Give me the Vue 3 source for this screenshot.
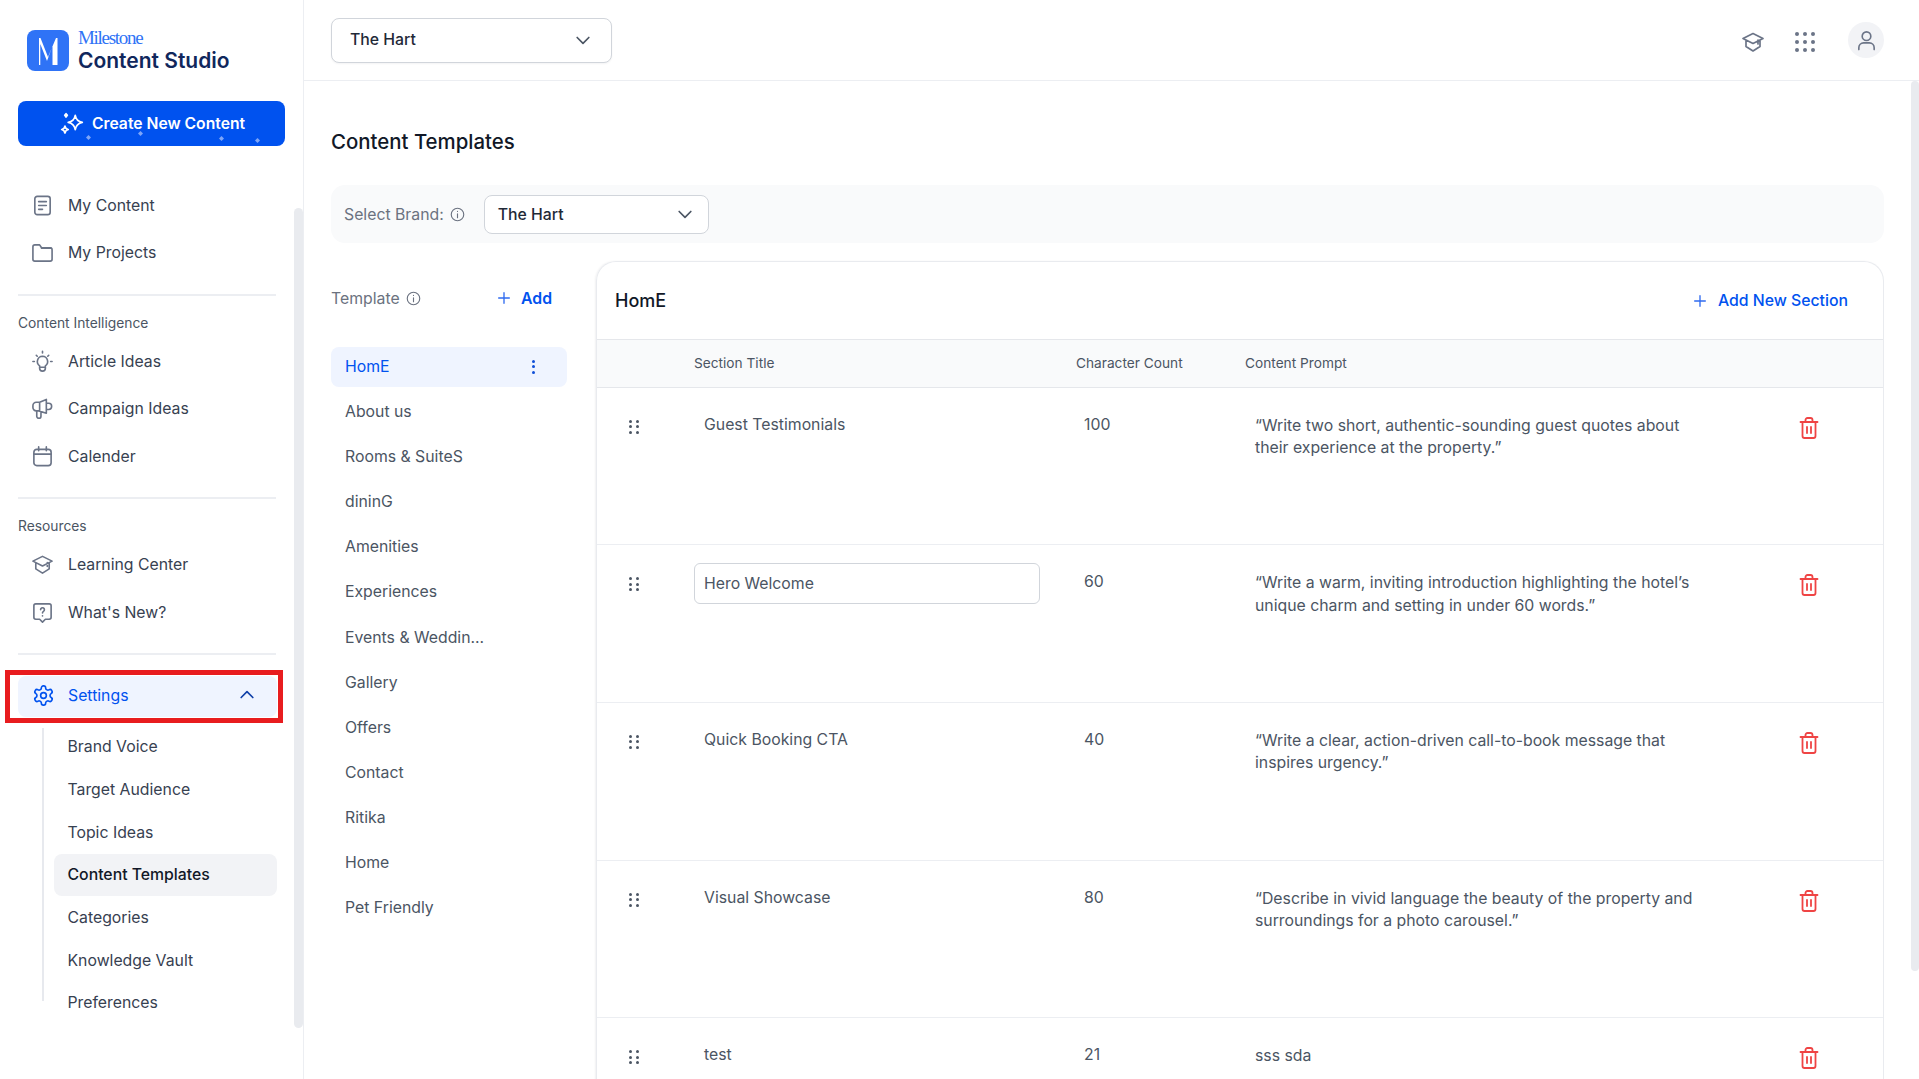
<template>
  <div class="page">
    <aside class="sidebar">
      <div class="logo">
        <div class="logo-mark"><svg width="28" height="32" viewBox="0 0 28 32"><path d="M5 30V3h1.500L14 22 22 3h1.500v27h-5V11L13 26 6.300 9v21z" fill="#fff"/></svg></div>
        <div class="logo-text">
          <div class="logo-brand">Milestone</div>
          <div class="logo-name">Content Studio</div>
        </div>
      </div>

      <button class="create-btn">
        <svg width="26" height="26" viewBox="0 0 24 24" fill="none" stroke="#fff" stroke-width="1.600" stroke-linejoin="round"><path d="M15 4c.7 4 2.400 5.800 6.500 6.500-4.100.8-5.800 2.600-6.500 6.700-.7-4.100-2.400-5.900-6.500-6.700C12.600 9.800 14.300 8 15 4z"/><path d="M5.500 14c.3 1.900 1.100 2.800 3 3.100-1.900.4-2.700 1.300-3 3.200-.3-1.900-1.100-2.800-3-3.200 1.900-.3 2.700-1.200 3-3.100z"/><path d="M6.500 2.500l1.200 1.500-1.200 1.500-1.200-1.500z" fill="#fff"/></svg>
        <span>Create New Content</span>
        <i class="spark" style="left:68px;top:34px"></i>
        <i class="spark" style="left:120px;top:30px"></i>
        <i class="spark" style="left:201px;top:35px"></i>
        <i class="spark" style="left:237px;top:37px"></i>
      </button>

      <nav class="nav nav-first">
        <a class="nav-item">
          <svg class="ico" viewBox="0 0 24 24"><rect x="4" y="2.500" width="16" height="19" rx="2.500"/><path d="M8 8h8M8 12h8M8 16h4"/></svg>
          My Content
        </a>
        <a class="nav-item">
          <svg class="ico" viewBox="0 0 24 24"><path d="M2 6a2 2 0 0 1 2-2h5l2 3h9a2 2 0 0 1 2 2v10a2 2 0 0 1-2 2H4a2 2 0 0 1-2-2z"/><path d="M11 7.500h10"/></svg>
          My Projects
        </a>
      </nav>
      <hr class="divider" />

      <div class="nav-label">Content Intelligence</div>
      <nav class="nav">
        <a class="nav-item">
          <svg class="ico" viewBox="0 0 24 24"><path d="M12 6.500a5.500 5.500 0 0 0-3 10v2.500a3 3 0 0 0 6 0v-2.500a5.500 5.500 0 0 0-3-10zM12 1.500v1.500M3.500 12H2M22 12h-1.500M5.500 5.500l1 1M18.500 5.500l-1 1M9 18h6"/></svg>
          Article Ideas
        </a>
        <a class="nav-item">
          <svg class="ico" viewBox="0 0 24 24"><path d="M16 2.500V17l-8-2.500H5.500A3.500 3.500 0 0 1 2 11V9a3.500 3.500 0 0 1 3.500-3.500H9zM16 6.500h2.500a3 3 0 0 1 3 3v.5a3 3 0 0 1-3 3H16M6 14.500V20a2.200 2.200 0 0 0 4.400 0v-4.500M9 5.500v9"/></svg>
          Campaign Ideas
        </a>
        <a class="nav-item">
          <svg class="ico" viewBox="0 0 24 24"><rect x="3" y="4.500" width="18" height="17" rx="3"/><path d="M3 9.500h18M8 2v4M16 2v4"/></svg>
          Calender
        </a>
      </nav>
      <hr class="divider" />

      <div class="nav-label">Resources</div>
      <nav class="nav">
        <a class="nav-item">
          <svg class="ico" viewBox="0 0 24 24"><path d="M12 3.500l10 5-10 5-10-5zM5 10.500v6l7 4.500 7-4.500v-6M17 10v4"/></svg>
          Learning Center
        </a>
        <a class="nav-item">
          <svg class="ico" viewBox="0 0 24 24"><path d="M5 3h14a2 2 0 0 1 2 2v12a2 2 0 0 1-2 2h-4l-3 3-3-3H5a2 2 0 0 1-2-2V5a2 2 0 0 1 2-2z"/><path d="M10 9a2 2 0 1 1 3 1.800c-.7.400-1 .8-1 1.700M12 15.500v.1"/></svg>
          What's New?
        </a>
      </nav>
      <hr class="divider" />

      <div class="settings">
        <svg class="ico" viewBox="0 0 24 24"><circle cx="12" cy="12" r="3"/><path d="M12.220 2h-.44a2 2 0 0 0-2 2v.18a2 2 0 0 1-1 1.730l-.43.25a2 2 0 0 1-2 0l-.15-.08a2 2 0 0 0-2.730.73l-.22.38a2 2 0 0 0 .73 2.730l.15.1a2 2 0 0 1 1 1.720v.51a2 2 0 0 1-1 1.740l-.15.09a2 2 0 0 0-.73 2.730l.22.38a2 2 0 0 0 2.730.73l.15-.08a2 2 0 0 1 2 0l.43.25a2 2 0 0 1 1 1.730V20a2 2 0 0 0 2 2h.44a2 2 0 0 0 2-2v-.18a2 2 0 0 1 1-1.730l.43-.25a2 2 0 0 1 2 0l.15.08a2 2 0 0 0 2.730-.73l.22-.39a2 2 0 0 0-.73-2.730l-.15-.08a2 2 0 0 1-1-1.740v-.5a2 2 0 0 1 1-1.740l.15-.09a2 2 0 0 0 .73-2.730l-.22-.38a2 2 0 0 0-2.730-.73l-.15.08a2 2 0 0 1-2 0l-.43-.25a2 2 0 0 1-1-1.730V4a2 2 0 0 0-2-2z"/></svg>
        <span class="settings-text">Settings</span>
        <svg class="chev" width="20" height="20" viewBox="0 0 24 24"><path d="M5 15l7-7 7 7"/></svg>
        <div class="annot"></div>
      </div>

      <div class="sub-nav">
        <a v-for="s in subItems" :key="s" class="sub-item" :class="{ active: s === 'Content Templates' }">{{ s }}</a>
      </div>
      <div class="side-scroll"></div>
    </aside>

    <main class="main">
      <header class="topbar">
        <div class="select select-top">
          <span>The Hart</span>
          <svg class="chev-down" width="20" height="20" viewBox="0 0 24 24"><path d="M5 9l7 7 7-7"/></svg>
        </div>
        <div class="top-icons">
          <svg class="ico top-ico" viewBox="0 0 24 24"><path d="M12 3.500l10 5-10 5-10-5zM5 10.500v6l7 4.500 7-4.500v-6M17 10v4"/></svg>
          <div class="dots">
            <i v-for="n in 9" :key="n"></i>
          </div>
          <div class="avatar">
            <svg class="ico" viewBox="0 0 24 24"><circle cx="12" cy="7.500" r="4.500"/><path d="M4 21.500v-2a5 5 0 0 1 5-5h6a5 5 0 0 1 5 5v2"/></svg>
          </div>
        </div>
      </header>

      <section class="content">
        <h1 class="page-title">Content Templates</h1>

        <div class="brand-bar">
          <span class="brand-label">Select Brand:</span>
          <svg class="info" viewBox="0 0 24 24"><circle cx="12" cy="12" r="10"/><path d="M12 11v6M12 7v.1"/></svg>
          <div class="select select-brand">
            <span>The Hart</span>
            <svg class="chev-down" width="20" height="20" viewBox="0 0 24 24"><path d="M5 9l7 7 7-7"/></svg>
          </div>
        </div>

        <div class="columns">
          <div class="templates">
            <div class="templates-head">
              <span class="brand-label">Template</span>
              <svg class="info" viewBox="0 0 24 24"><circle cx="12" cy="12" r="10"/><path d="M12 11v6M12 7v.1"/></svg>
              <a class="add">
                <svg class="plus" viewBox="0 0 24 24"><path d="M12 4v16M4 12h16"/></svg>
                Add
              </a>
            </div>
            <div class="template-list">
              <div v-for="(t, i) in templates" :key="t" class="template-item" :class="{ active: i === 0 }">
                {{ t }}
                <span v-if="i === 0" class="kebab"><i></i><i></i><i></i></span>
              </div>
            </div>
          </div>

          <div class="card">
            <div class="card-head">
              <span class="card-title">HomE</span>
              <a class="add add-section">
                <svg class="plus" viewBox="0 0 24 24"><path d="M12 4v16M4 12h16"/></svg>
                Add New Section
              </a>
            </div>
            <div class="row head-row">
              <span></span>
              <span>Section Title</span>
              <span>Character Count</span>
              <span>Content Prompt</span>
            </div>
            <div v-for="r in rows" :key="r.title" class="row body-row">
              <span class="drag"><i v-for="n in 6" :key="n"></i></span>
              <div v-if="r.editing" class="title-input">{{ r.title }}</div>
              <div v-else class="title-cell">{{ r.title }}</div>
              <div class="count-cell">{{ r.count }}</div>
              <div class="prompt-cell">{{ r.prompt }}</div>
              <svg class="trash" viewBox="0 0 24 24"><path d="M3.500 6h17M8.500 6V4a2 2 0 0 1 2-2h3a2 2 0 0 1 2 2v2M5.500 6v14a2 2 0 0 0 2 2h9a2 2 0 0 0 2-2V6M10 11v6M14 11v6"/></svg>
            </div>
          </div>
        </div>
      </section>
      <div class="main-scroll"></div>
    </main>
  </div>
</template>

<script setup>
const subItems = [
  'Brand Voice',
  'Target Audience',
  'Topic Ideas',
  'Content Templates',
  'Categories',
  'Knowledge Vault',
  'Preferences',
]

const templates = [
  'HomE',
  'About us',
  'Rooms & SuiteS',
  'dininG',
  'Amenities',
  'Experiences',
  'Events & Weddin...',
  'Gallery',
  'Offers',
  'Contact',
  'Ritika',
  'Home',
  'Pet Friendly',
]

const rows = [
  { title: 'Guest Testimonials', count: '100', prompt: '“Write two short, authentic-sounding guest quotes about their experience at the property.”' },
  { title: 'Hero Welcome', count: '60', editing: true, prompt: '“Write a warm, inviting introduction highlighting the hotel’s unique charm and setting in under 60 words.”' },
  { title: 'Quick Booking CTA', count: '40', prompt: '“Write a clear, action-driven call-to-book message that inspires urgency.”' },
  { title: 'Visual Showcase', count: '80', prompt: '“Describe in vivid language the beauty of the property and surroundings for a photo carousel.”' },
  { title: 'test', count: '21', prompt: 'sss sda' },
]
</script>

<style>
html, body {
  margin: 0;
  overflow: hidden;
  background: #fff;
}
</style>

<style scoped>
.page {
  display: flex;
  width: 1919px;
  height: 1079px;
  overflow: hidden;
  font-family: Inter, "Noto Sans", sans-serif;
  font-size: 15.8px;
  color: #374151;
}

.sidebar {
  position: relative;
  box-sizing: border-box;
  width: 304px;
  flex: none;
  padding: 30px 0 0 18px;
  border-right: 1px solid #eceef2;
}

.logo {
  display: flex;
  align-items: center;
  gap: 9px;
  height: 41px;
  margin-left: 9px;
}
.logo-mark {
  display: flex;
  align-items: center;
  justify-content: center;
  width: 42px;
  height: 41px;
  background: #2f73f6;
  border-radius: 8px;
}
.logo-brand {
  font-family: "Liberation Serif", serif;
  font-size: 19px;
  line-height: 18px;
  letter-spacing: -1.300px;
  color: #2f73f6;
  margin-top: 2px;
}
.logo-name {
  font-size: 21px;
  font-weight: 600;
  line-height: 26px;
  padding-top: 1px;
  color: #10275c;
}

.create-btn {
  position: relative;
  display: flex;
  align-items: center;
  gap: 7px;
  box-sizing: border-box;
  width: 267px;
  height: 45px;
  margin-top: 30px;
  padding: 0 0 0 41px;
  border: none;
  border-radius: 8px;
  background: #0052ef;
  color: #fff;
  font-family: inherit;
  font-size: 15.700px;
  font-weight: 600;
}
.spark {
  position: absolute;
  width: 5px;
  height: 5px;
  background: #7ea6f8;
  transform: rotate(45deg) scale(.7);
}

.nav-first {
  margin-top: 35.500px;
}
.nav-item {
  display: flex;
  align-items: center;
  gap: 14px;
  height: 47.500px;
  padding-left: 13px;
}
.ico {
  width: 23px;
  height: 23px;
  flex: none;
  fill: none;
  stroke: #6b7487;
  stroke-width: 1.700;
  stroke-linecap: round;
  stroke-linejoin: round;
}

.divider {
  width: 258px;
  height: 2px;
  margin: 17px 0 0;
  border: none;
  background: #eceef2;
}
.nav-label {
  height: 20px;
  margin: 17px 0 5px;
  font-size: 13.800px;
  line-height: 20px;
  color: #4b5563;
}

.settings {
  position: relative;
  display: flex;
  align-items: center;
  gap: 13px;
  box-sizing: border-box;
  width: 259px;
  height: 41px;
  margin-top: 20.500px;
  padding: 0 20px 2px 14px;
  border-radius: 8px;
  background: #eff4ff;
  color: #0052ef;
}
.settings .ico {
  stroke: #0052ef;
}
.settings-text {
  flex: 1;
}
.chev {
  fill: none;
  stroke: #0f3fa8;
  stroke-width: 2;
  stroke-linecap: round;
  stroke-linejoin: round;
}
.annot {
  position: absolute;
  left: -13px;
  top: -6px;
  right: -6px;
  bottom: -6px;
  border: 5px solid #e81c1f;
  pointer-events: none;
}

.sub-nav {
  position: relative;
  margin: 9px 0 0 36px;
  width: 223px;
}
.sub-nav::before {
  content: "";
  position: absolute;
  left: -12px;
  top: 2px;
  width: 2px;
  height: 273px;
  background: #e7e9ee;
}
.sub-item {
  display: flex;
  align-items: center;
  height: 42.700px;
  padding-left: 13.500px;
  border-radius: 8px;
}
.sub-item.active {
  background: #f2f3f6;
  color: #111827;
  font-weight: 500;
}

.side-scroll {
  position: absolute;
  left: 294px;
  top: 208px;
  width: 9px;
  height: 820px;
  border-radius: 5px;
  background: #e9ebef;
}

.main {
  position: relative;
  flex: 1;
  min-width: 0;
}
.topbar {
  display: flex;
  align-items: center;
  justify-content: space-between;
  box-sizing: border-box;
  height: 81px;
  padding: 0 35px 0 27px;
  border-bottom: 1px solid #eceef2;
}
.select {
  display: flex;
  align-items: center;
  justify-content: space-between;
  box-sizing: border-box;
  border: 1px solid #d1d5db;
  border-radius: 8px;
  background: #fff;
  color: #1f2937;
}
.select-top {
  width: 281px;
  height: 45px;
  padding: 0 18px 2px;
  margin-top: 1px;
  font-weight: 500;
  box-shadow: 0 1px 2px rgba(16, 24, 40, .05);
}
.select-brand {
  width: 225px;
  height: 39px;
  margin-left: 19px;
  padding: 0 13px;
  font-weight: 500;
}
.chev-down {
  fill: none;
  stroke: #4b5563;
  stroke-width: 2;
  stroke-linecap: round;
  stroke-linejoin: round;
}
.top-icons {
  display: flex;
  align-items: center;
}
.top-ico {
  width: 24px;
  height: 24px;
  margin-top: 3px;
}
.dots {
  display: grid;
  grid-template-columns: repeat(3, 4px);
  gap: 4px;
  margin: 3px 41px 0 30px;
}
.dots i {
  width: 4px;
  height: 4px;
  border-radius: 50%;
  background: #6b7487;
}
.avatar {
  display: flex;
  align-items: center;
  justify-content: center;
  width: 36px;
  height: 36px;
  margin-left: -8px;
  border-radius: 50%;
  background: #f2f3f6;
}

.content {
  padding: 0 35px 0 27px;
}
.page-title {
  margin: 0;
  padding-top: 49px;
  font-size: 20.400px;
  font-weight: 500;
  line-height: 24px;
  color: #111827;
}
.brand-bar {
  display: flex;
  align-items: center;
  box-sizing: border-box;
  height: 58px;
  margin-top: 31px;
  padding-left: 13px;
  border-radius: 14px;
  background: #f9fafb;
}
.brand-label {
  color: #6b7280;
}
.info {
  width: 15px;
  height: 15px;
  margin-left: 6px;
  fill: none;
  stroke: #6b7280;
  stroke-width: 1.800;
  stroke-linecap: round;
}

.columns {
  display: flex;
  gap: 29px;
  margin-top: 18px;
}
.templates {
  width: 236px;
  flex: none;
}
.templates-head {
  display: flex;
  align-items: center;
  height: 24px;
  padding-top: 25px;
}
.add {
  display: flex;
  align-items: center;
  gap: 9px;
  margin-left: auto;
  margin-right: 15px;
  color: #0052ef;
  font-weight: 600;
}
.plus {
  width: 16px;
  height: 16px;
  fill: none;
  stroke: #2f6bf0;
  stroke-width: 2;
  stroke-linecap: round;
}
.template-list {
  margin-top: 36.500px;
}
.template-item {
  display: flex;
  align-items: center;
  justify-content: space-between;
  box-sizing: border-box;
  height: 40px;
  margin-bottom: 5.100px;
  padding: 0 32px 0 14px;
  border-radius: 8px;
  color: #4b5563;
}
.template-item.active {
  background: #eff4ff;
  color: #0052ef;
}
.kebab {
  display: flex;
  flex-direction: column;
  gap: 2.500px;
}
.kebab i {
  width: 3px;
  height: 3px;
  border-radius: 50%;
  background: #0f4fd8;
}

.card {
  flex: 1;
  min-width: 0;
  border: 1px solid #e9ebef;
  border-bottom: none;
  border-radius: 20px 20px 0 0;
  box-shadow: -1px 0 2px rgba(16, 24, 40, .06);
}
.card-head {
  display: flex;
  align-items: center;
  justify-content: space-between;
  box-sizing: border-box;
  height: 77px;
  padding: 0 35px 0 18px;
}
.card-title {
  font-size: 18px;
  font-weight: 500;
  color: #111827;
}
.add-section {
  gap: 10px;
  margin: 0;
  font-weight: 500;
}

.row {
  display: grid;
  grid-template-columns: 97px 382px 169px 1fr;
  box-sizing: border-box;
}
.head-row {
  align-items: center;
  height: 48.500px;
  padding-bottom: 1px;
  border-top: 1px solid #e5e7eb;
  border-bottom: 1px solid #e5e7eb;
  background: #f9fafb;
  font-size: 13.700px;
  color: #4b5563;
}
.body-row {
  position: relative;
  height: 157.700px;
  padding-top: 27px;
  border-bottom: 1px solid #eceef2;
  color: #4b5563;
}
.drag {
  display: grid;
  grid-template-columns: repeat(2, 3px);
  gap: 2.500px 4px;
  margin: 5px 0 0 32px;
  align-self: start;
}
.drag i {
  width: 3px;
  height: 3px;
  border-radius: 50%;
  background: #4b5563;
}
.title-cell {
  margin-top: -1px;
  padding-left: 10px;
  line-height: 22px;
}
.title-input {
  box-sizing: border-box;
  width: 346px;
  height: 41px;
  margin-top: -9px;
  padding-left: 9px;
  border: 1px solid #d1d5db;
  border-radius: 6px;
  line-height: 39px;
}
.count-cell {
  margin-top: -1px;
  padding-left: 8px;
  line-height: 22px;
}
.prompt-cell {
  width: 445px;
  padding-left: 10px;
  line-height: 22.500px;
}
.trash {
  position: absolute;
  left: 1200px;
  top: 28px;
  width: 24px;
  height: 24px;
  fill: none;
  stroke: #ef4444;
  stroke-width: 1.800;
  stroke-linecap: round;
  stroke-linejoin: round;
}

.main-scroll {
  position: absolute;
  right: 0;
  top: 81px;
  width: 8px;
  height: 890px;
  border-radius: 4px;
  background: #e9ebef;
}
</style>
